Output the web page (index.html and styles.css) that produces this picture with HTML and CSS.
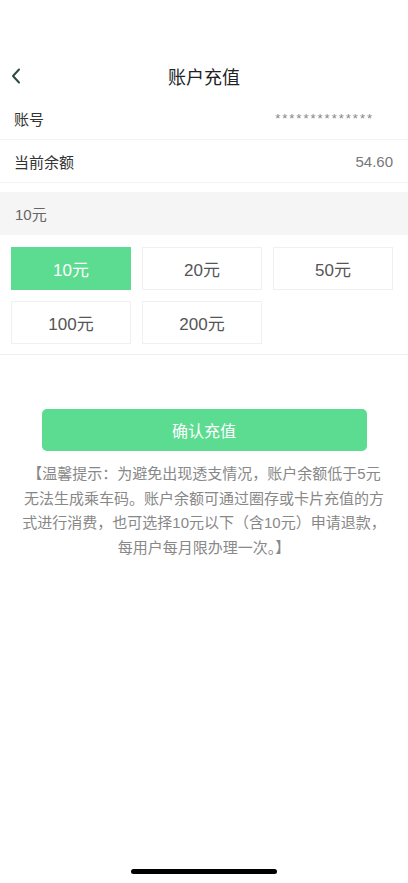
FILE: index.html
```html
<!DOCTYPE html>
<html lang="zh-CN">
<head>
<meta charset="utf-8">
<title>账户充值</title>
<link rel="stylesheet" href="styles.css">
</head>
<body>
<div class="page">
  <header class="nav">
    <svg class="back" width="10" height="16" viewBox="0 0 10 16"><path d="M8 1.5 L2 8 L8 14.5" fill="none" stroke="#2f4a44" stroke-width="2" stroke-linecap="round" stroke-linejoin="round"/></svg>
    <h1 class="title">账户充值</h1>
  </header>
  <div class="row">
    <span class="label">账号</span>
    <span class="stars">**************</span>
  </div>
  <div class="row">
    <span class="label">当前余额</span>
    <span class="value">54.60</span>
  </div>
  <div class="selected">10元</div>
  <div class="amounts">
    <div class="amt active">10元</div>
    <div class="amt">20元</div>
    <div class="amt">50元</div>
    <div class="amt">100元</div>
    <div class="amt">200元</div>
  </div>
  <button class="confirm">确认充值</button>
  <p class="tip">【温馨提示：为避免出现透支情况，账户余额低于5元无法生成乘车码。账户余额可通过圈存或卡片充值的方式进行消费，也可选择10元以下（含10元）申请退款，每用户每月限办理一次。】</p>
  <div class="home-indicator"></div>
</div>
</body>
</html>
```
FILE: styles.css
```css
* { box-sizing: border-box; }
html, body { margin: 0; padding: 0; background: #fff; }
body {
  font-family: "Liberation Sans", "Noto Sans CJK SC", sans-serif;
  color: #333;
}
.page { position: relative; width: 408px; height: 883px; overflow: hidden; }
.nav {
  position: relative;
  margin-top: 55px;
  height: 42px;
  display: flex;
  align-items: center;
  justify-content: center;
}
.back { position: absolute; left: 11px; top: 13px; }
.title { margin: 0; font-size: 18px; font-weight: 400; color: #222; }
.row {
  height: 43px;
  display: flex;
  align-items: center;
  justify-content: space-between;
  padding: 0 15px 0 14px;
  border-bottom: 1px solid #f3f3f3;
}
.label { font-size: 15px; color: #333; }
.stars { font-size: 13px; color: #888; letter-spacing: 2px; margin-right: 19px; }
.value { font-size: 15px; color: #777; }
.selected {
  margin-top: 9px;
  height: 43px;
  background: #f5f5f5;
  display: flex;
  align-items: center;
  padding-left: 15px;
  font-size: 15px;
  color: #666;
}
.amounts {
  display: grid;
  grid-template-columns: repeat(3, 120px);
  grid-auto-rows: 43px;
  gap: 11px;
  padding: 12px 11px 10px;
  border-bottom: 1px solid #eeeeee;
}
.amt {
  border: 1px solid #f0f0f0;
  display: flex;
  align-items: center;
  justify-content: center;
  font-size: 17px;
  color: #555;
}
.amt.active { background: #5cdc91; border-color: #5cdc91; color: #fff; }
.confirm {
  display: block;
  width: 325px;
  height: 42px;
  margin: 54px auto 0;
  border: 0;
  border-radius: 5px;
  background: #5cdc91;
  color: #fff;
  font-family: "Liberation Sans", "Noto Sans CJK SC", sans-serif;
  font-size: 16px;
}
.tip {
  margin: 11px 20px 0;
  font-size: 15px;
  line-height: 24.7px;
  color: #888;
  text-align: center;
}
.home-indicator {
  position: absolute;
  left: 131px;
  top: 869px;
  width: 146px;
  height: 5px;
  border-radius: 3px;
  background: #000;
}
```
